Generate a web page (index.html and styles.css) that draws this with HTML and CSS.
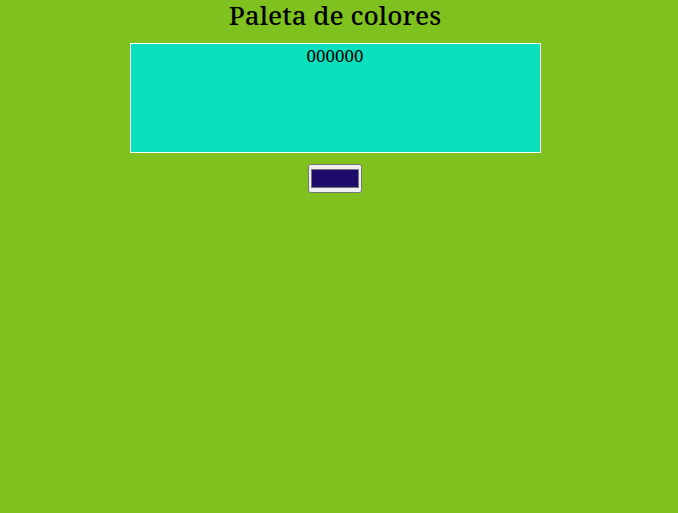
FILE: index.html
```html
<!DOCTYPE html>
<html lang="es">
<head>
<meta charset="utf-8">
<title>Paleta de colores</title>
<link rel="stylesheet" href="styles.css">
</head>
<body>
<div class="page">
  <h1 class="title">Paleta de colores</h1>
  <div class="swatch"><span class="code">000000</span></div>
  <input class="picker" type="color" value="#1f0b69">
</div>
</body>
</html>
```
FILE: styles.css
```css
html, body {
  margin: 0;
  padding: 0;
  background: #7fc11e;
}
.page {
  display: flex;
  flex-direction: column;
  align-items: center;
  width: 670px;
  font-family: "Noto Serif", "DejaVu Serif", serif;
  color: #000;
}
.title {
  margin: 0;
  font-size: 26px;
  font-weight: 500;
  line-height: 30px;
}
.swatch {
  box-sizing: border-box;
  width: 411px;
  height: 110px;
  margin-top: 13px;
  border: 1px solid #ffffff;
  background: #0be0bc;
  text-align: center;
}
.code {
  display: block;
  font-size: 17px;
  line-height: 24px;
}
.picker {
  box-sizing: border-box;
  width: 54px;
  height: 29px;
  padding: 1px;
  margin-top: 11px;
}
.picker::-webkit-color-swatch-wrapper {
  padding: 3px 1px;
}
```
